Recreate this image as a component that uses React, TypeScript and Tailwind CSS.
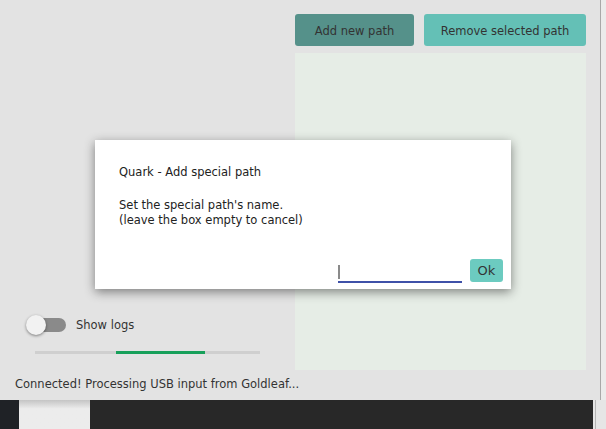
import React from "react";

const font = { fontFamily: '"DejaVu Sans", Verdana, sans-serif' };

export default function App() {
  return (
    <div className="flex h-[429px] w-[606px] flex-col overflow-hidden bg-[#282828]" style={font}>
      <div className="flex h-[400px]">
        <Window />
        <div className="w-[6px] border-l border-[#a8a8a8] bg-[#ebebeb]" />
      </div>
      <div className="flex h-[29px]">
        <div className="w-[19px] bg-[#1f2226]" />
        <div className="w-[71px] bg-gradient-to-b from-[#c4c4c4] to-[#ececec] to-30%" />
        <div className="flex-1 bg-[#282828]" />
        <div className="flex w-[13px] bg-[#e6e6e6]">
          <div className="ml-[2px] w-px bg-[#b5b5b5]" />
        </div>
      </div>
    </div>
  );
}

const Window = () => {
  return (
    <div className="relative flex w-[600px] flex-col bg-[#e3e3e3] text-[11.5px] text-[#333]">
      <div className="ml-[295px] mt-[14px] flex h-[32px] gap-[10px]">
        <button className="w-[119px] rounded-[3px] bg-[#55918a] pt-[3px]">Add new path</button>
        <button className="w-[162px] rounded-[3px] bg-[#64c0b6] pt-[3px]">Remove selected path</button>
      </div>
      <div className="mt-[7px] flex h-[317px]">
        <div className="flex w-[295px] flex-col justify-end pb-[16px]">
          <div className="ml-[26px] flex items-center gap-[10px]">
            <div className="relative mt-[2px] h-[20px] w-[40px]">
              <div className="absolute left-[5px] top-[3px] h-[14px] w-[35px] rounded-full bg-[#8a8a8a]" />
              <div className="absolute left-0 top-0 h-[20px] w-[20px] rounded-full bg-[#f2f2f2] shadow-[0_1px_3px_rgba(0,0,0,0.45)]" />
            </div>
            <span className="mt-[3px]">Show logs</span>
          </div>
          <div className="ml-[35px] mt-[16px] flex h-[3px] w-[225px] bg-[#cfcfcf]">
            <div className="ml-[81px] w-[89px] bg-[#17a05a]" />
          </div>
        </div>
        <div className="w-[291px] bg-[#e6ede6]" />
      </div>
      <div className="ml-[15px] mt-[6px]">Connected! Processing USB input from Goldleaf...</div>
      <Dialog />
    </div>
  );
};

const Dialog = () => {
  return (
    <div className="absolute left-[95px] top-[140px] flex h-[149px] w-[416px] flex-col bg-white pl-[24px] pr-[8px] pt-[24px] text-[11.5px] text-[#222] shadow-[0_3px_10px_rgba(0,0,0,0.45)]">
      <div>Quark - Add special path</div>
      <div className="mt-[17px] leading-[15px]">
        Set the special path's name.
        <br />
        (leave the box empty to cancel)
      </div>
      <div className="mt-auto mb-[6px] flex items-end justify-end gap-[8px]">
        <div className="flex h-[21px] w-[124px] items-center border-b-[2px] border-[#3f51a8]">
          <div className="h-[14px] w-[2px] bg-[#8a8a8a]" />
        </div>
        <button className="mb-[1px] h-[23px] w-[33px] rounded-[3px] bg-[#6ccbc0] text-[13px] text-[#333]">Ok</button>
      </div>
    </div>
  );
};
